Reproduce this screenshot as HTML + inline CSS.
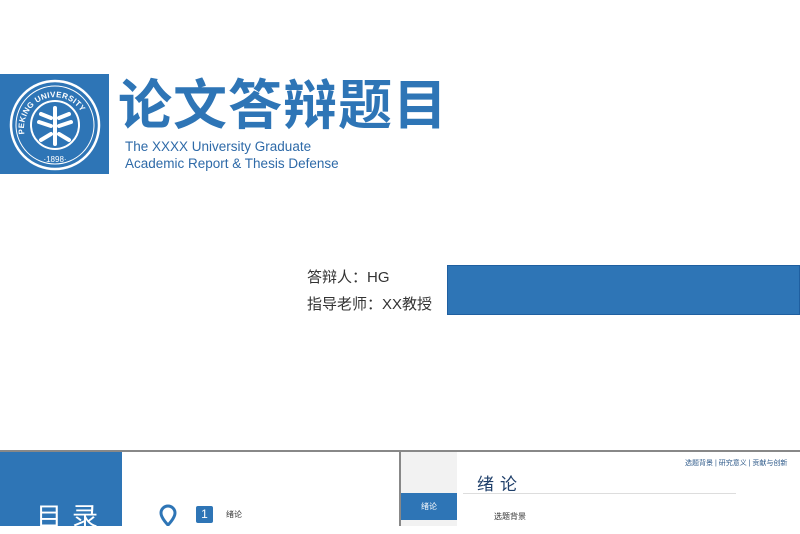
<!DOCTYPE html>
<html><head><meta charset="utf-8"><style>
body{margin:0;width:800px;height:526px;position:relative;overflow:hidden;background:#fff;font-family:"Liberation Sans","Noto Sans CJK SC",sans-serif}
.a{position:absolute}
</style></head><body>
<div class="a" style="left:0;top:74px;width:109px;height:100px;background:#2e75b6"></div>
<svg class="a" style="left:8px;top:78px" width="94" height="94" viewBox="0 0 94 94">
<circle cx="47" cy="47" r="44" fill="none" stroke="#fff" stroke-width="2.5"/>
<circle cx="47" cy="47" r="39" fill="none" stroke="#fff" stroke-width="1"/>
<circle cx="47" cy="47" r="24" fill="none" stroke="#fff" stroke-width="2"/>
<defs><path id="c" d="M17,58 A31,31 0 1,1 77,58"/></defs>
<text font-size="8" font-weight="bold" fill="#fff" letter-spacing="0.3"><textPath href="#c" startOffset="2">PEKING UNIVERSITY</textPath></text>
<text x="47" y="84" font-size="8" fill="#fff" text-anchor="middle">·1898·</text>
<g stroke="#fff" stroke-width="4" stroke-linecap="round" fill="none">
<line x1="47" y1="30" x2="47" y2="66"/>
<path d="M43,40 L33,36 M43,48 L31,44 M43,56 L33,62 M51,40 L61,36 M51,48 L63,44 M51,56 L61,62"/>
</g></svg>
<div class="a" style="left:118px;top:71px;font-size:54px;line-height:70px;font-weight:bold;color:#2e75b6;letter-spacing:1px;white-space:nowrap">论文答辩题目</div>
<div class="a" style="left:125px;top:138px;font-size:13.5px;line-height:17px;color:#2e6aa8">The XXXX University Graduate<br>Academic Report &amp; Thesis Defense</div>
<div class="a" style="left:307px;top:264px;font-size:15px;line-height:27px;color:#333">答辩人：HG<br>指导老师：XX教授</div>
<div class="a" style="left:447px;top:265px;width:353px;height:50px;background:#2e75b6;border:1px solid #1f5fa0;box-sizing:border-box"></div>
<div class="a" style="left:0;top:450px;width:800px;height:2px;background:#888"></div>
<div class="a" style="left:0;top:452px;width:122px;height:74px;background:#2e75b6"></div>
<div class="a" style="left:36px;top:497px;font-size:26px;color:#fff;letter-spacing:10px">目录</div>
<svg class="a" style="left:159px;top:504px" width="18" height="22"><path d="M9,2 a7,7 0 0 1 7,7 c0,5 -7,12 -7,12 c0,0 -7,-7 -7,-12 a7,7 0 0 1 7,-7z" fill="none" stroke="#2e75b6" stroke-width="3"/></svg>
<div class="a" style="left:196px;top:506px;width:17px;height:17px;background:#2e75b6;border-radius:2px;color:#fff;font-size:12px;text-align:center;line-height:17px">1</div>
<div class="a" style="left:226px;top:509px;font-size:8px;color:#333">绪论</div>
<div class="a" style="left:399px;top:452px;width:2px;height:74px;background:#888"></div>
<div class="a" style="left:401px;top:452px;width:56px;height:74px;background:#f2f2f2"></div>
<div class="a" style="left:401px;top:493px;width:56px;height:27px;background:#2e75b6;color:#fff;font-size:8px;text-align:center;line-height:27px">绪论</div>
<div class="a" style="left:477px;top:470px;font-size:17px;color:#1f3f6a;letter-spacing:6px">绪论</div>
<div class="a" style="left:463px;top:493px;width:273px;height:1px;background:#ddd"></div>
<div class="a" style="left:494px;top:511px;font-size:8px;color:#333">选题背景</div>
<div class="a" style="left:685px;top:458px;font-size:7px;color:#2e5a8a;white-space:nowrap">选题背景 | 研究意义 | 贡献与创新</div>
</body></html>
